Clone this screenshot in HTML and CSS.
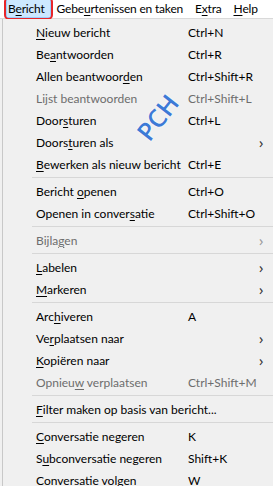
FILE: index.html
```html
<!DOCTYPE html>
<html lang="nl">
<head>
<meta charset="utf-8">
<title>Bericht menu</title>
<link rel="stylesheet" href="styles.css">
</head>
<body>
<div class="app">
  <nav class="menubar">
    <span class="top active"><span class="ann"></span>B<u>e</u>richt</span>
    <span class="top">Gebe<u>u</u>rtenissen en taken</span>
    <span class="top">E<u>x</u>tra</span>
    <span class="top"><u>H</u>elp</span>
  </nav>
  <div class="dropdown">
    <span class="wm">PCH</span>
    <div class="item"><span class="lbl"><u>N</u>ieuw bericht</span><span class="key">Ctrl+N</span></div>
    <div class="item"><span class="lbl">Be<u>a</u>ntwoorden</span><span class="key">Ctrl+R</span></div>
    <div class="item"><span class="lbl">Allen beantwoor<u>d</u>en</span><span class="key">Ctrl+Shift+R</span></div>
    <div class="item dis"><span class="lbl">Lijst beantwoorden</span><span class="key">Ctrl+Shift+L</span></div>
    <div class="item"><span class="lbl">Door<u>s</u>turen</span><span class="key">Ctrl+L</span></div>
    <div class="item"><span class="lbl">Doors<u>t</u>uren als</span><span class="key"></span><span class="arr">›</span></div>
    <div class="item"><span class="lbl"><u>B</u>ewerken als nieuw bericht</span><span class="key">Ctrl+E</span></div>
    <div class="sep"></div>
    <div class="item"><span class="lbl">Bericht <u>o</u>penen</span><span class="key">Ctrl+O</span></div>
    <div class="item"><span class="lbl">Openen in conver<u>s</u>atie</span><span class="key">Ctrl+Shift+O</span></div>
    <div class="sep"></div>
    <div class="item dis"><span class="lbl">Bijla<u>g</u>en</span><span class="key"></span><span class="arr">›</span></div>
    <div class="sep"></div>
    <div class="item"><span class="lbl"><u>L</u>abelen</span><span class="key"></span><span class="arr">›</span></div>
    <div class="item"><span class="lbl"><u>M</u>arkeren</span><span class="key"></span><span class="arr">›</span></div>
    <div class="sep"></div>
    <div class="item"><span class="lbl">Arc<u>h</u>iveren</span><span class="key">A</span></div>
    <div class="item"><span class="lbl">Ve<u>r</u>plaatsen naar</span><span class="key"></span><span class="arr">›</span></div>
    <div class="item"><span class="lbl"><u>K</u>opiëren naar</span><span class="key"></span><span class="arr">›</span></div>
    <div class="item dis"><span class="lbl">Opnieu<u>w</u> verplaatsen</span><span class="key">Ctrl+Shift+M</span></div>
    <div class="sep"></div>
    <div class="item"><span class="lbl wide"><u>F</u>ilter maken op basis van bericht...</span></div>
    <div class="sep"></div>
    <div class="item"><span class="lbl"><u>C</u>onversatie negeren</span><span class="key">K</span></div>
    <div class="item"><span class="lbl">S<u>u</u>bconversatie negeren</span><span class="key">Shift+K</span></div>
    <div class="item"><span class="lbl">Con<u>v</u>ersatie volgen</span><span class="key">W</span></div>
  </div>
</div>
</body>
</html>
```

FILE: styles.css
```css
html, body {
  margin: 0;
  padding: 0;
  background: #f0f0f0;
  overflow: hidden;
}
.app {
  width: 273px;
  height: 486px;
  font-family: Lato, "Noto Sans", sans-serif;
  font-size: 12px;
  color: #000;
  overflow: hidden;
}
u {
  text-decoration: underline;
  text-underline-offset: 2px;
  text-decoration-thickness: 1px;
}
.menubar {
  display: flex;
  height: 18px;
  background: #ffffff;
  border-bottom: 1px solid #d9d9d9;
  padding-left: 6px;
  align-items: stretch;
  letter-spacing: -0.2px;
}
.top {
  position: relative;
  display: flex;
  align-items: center;
  padding: 0 6px;
  white-space: nowrap;
  line-height: 16px;
}
.top.active {
  background: #cce8ff;
  border: 1px solid #99d1ff;
  border-top: 0;
  padding: 0 5px 0 1px;
}
.ann {
  position: absolute;
  left: -3px;
  right: -3px;
  top: -3px;
  bottom: -3px;
  border: 2px solid #e8262a;
  border-radius: 5px;
}
.dropdown {
  position: relative;
  margin-left: 2px;
  border-left: 1px solid #c8c8c8;
  padding-top: 2px;
  background: #f0f0f0;
}
.item {
  display: grid;
  grid-template-columns: 152px 1fr 14px;
  height: 22px;
  align-items: center;
  padding-left: 33px;
  white-space: nowrap;
}
.lbl.wide {
  grid-column: 1 / 4;
}
.dis {
  color: #6d6d6d;
}
.arr {
  font-family: "Noto Sans", sans-serif;
  font-size: 14px;
  color: #333;
  text-align: left;
}
.dis .arr {
  color: #9a9a9a;
}
.sep {
  height: 1px;
  background: #d7d7d7;
  margin: 2px 0 2px 29px;
}
.wm {
  position: absolute;
  left: 124px;
  top: 83px;
  width: 60px;
  height: 30px;
  display: flex;
  align-items: center;
  justify-content: center;
  transform: rotate(-52deg);
  color: #3d7ad6;
  font-family: "Open Sans", "Noto Sans", sans-serif;
  font-size: 25px;
  font-weight: 600;
  text-shadow: 0 0 2px #ffffff, 0 0 1px #ffffff;
  pointer-events: none;
}
```
